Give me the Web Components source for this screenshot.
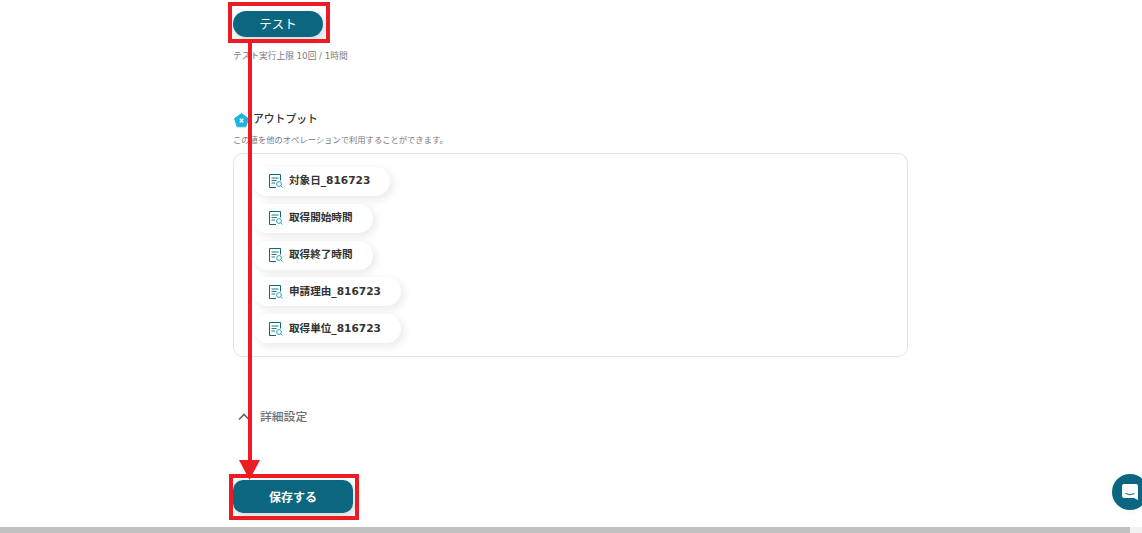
<!DOCTYPE html>
<html lang="ja">
<head>
<meta charset="utf-8">
<title>アウトプット</title>
<style>
html, body { margin: 0; height: 100%; overflow: hidden; background: #fff; }
body { font-family: "DejaVu Sans", "Noto Sans CJK JP", sans-serif; }
</style>
</head>
<body>
<x-page>
	<x-button slot="test" style="--w:90px;--h:26px;--r:13px;--fs:12.5px;--fw:400;--shift:-1px">テスト</x-button>
	<x-output-box slot="output">
		<x-pill>対象日_816723</x-pill>
		<x-pill>取得開始時間</x-pill>
		<x-pill>取得終了時間</x-pill>
		<x-pill>申請理由_816723</x-pill>
		<x-pill>取得単位_816723</x-pill>
	</x-output-box>
	<x-button slot="save" style="--w:120px;--h:33px;--r:10px;--fs:12px;--fw:700;--shift:0px">保存する</x-button>
</x-page>
<x-chat></x-chat>
<x-marks></x-marks>

<script>
class XPage extends HTMLElement {
	constructor() {
		super();
		this.attachShadow({mode:"open"}).innerHTML = `
<style>
:host { display: flex; flex-direction: column; height: 533px; box-sizing: border-box; padding: 11px 0 0 233px; }
.note { margin-top: 13px; font-size: 8.7px; line-height: 13px; color: #7a7a7a; }
h2 { display: flex; align-items: center; gap: 4px; margin: 48px 0 0 1px; font-size: 10.8px; line-height: 18px; font-weight: 500; color: #333; }
h2 svg { flex: none; }
.desc { margin: 5px 0 0; font-size: 8.3px; line-height: 12px; color: #7a7a7a; }
.slot-output { display: block; margin-top: 7px; }
.more { display: flex; align-items: center; gap: 10px; margin: 51px 0 0 5px; font-size: 11.8px; line-height: 18px; font-weight: 500; color: #6f6f6f; }
.save { display: block; margin-top: 54px; }
.bar { position: fixed; left: 0; right: 0; bottom: 0; height: 6px; background: #f1f1f1; }
.bar i { display: block; width: 1130px; height: 100%; background: #c1c1c1; }
</style>
<slot name="test"></slot>
<div class="note">テスト実行上限 10回 / 1時間</div>
<h2>
	<svg width="15" height="15" viewBox="0 0 15 15"><path d="M7.5 .6 14.4 5.6 11.8 13.8H3.2L.6 5.6Z" fill="#1cb4e3" stroke="#1cb4e3" stroke-linejoin="round"/><path d="M5.7 5.7 9.3 9.5M9.3 5.7 5.7 9.5" stroke="#fff" stroke-width="1.2"/></svg>
	<span>アウトプット</span>
</h2>
<p class="desc">この値を他のオペレーションで利用することができます。</p>
<div class="slot-output"><slot name="output"></slot></div>
<div class="more">
	<svg width="12" height="8" viewBox="0 0 12 8"><path d="M1 6.5 6 1.5 11 6.5" fill="none" stroke="#666" stroke-width="1.7"/></svg>
	<span>詳細設定</span>
</div>
<div class="save"><slot name="save"></slot></div>
<div class="bar"><i></i></div>`;
	}
}

class XButton extends HTMLElement {
	constructor() {
		super();
		this.attachShadow({mode:"open"}).innerHTML = `
<style>
:host { display: flex; align-items: center; justify-content: center; box-sizing: border-box; width: var(--w); height: var(--h); border-radius: var(--r); background: #0b6780; color: #fff; font-size: var(--fs); font-weight: var(--fw); box-shadow: 2px 3px 8px rgba(0,0,0,.18); }
span { margin-top: var(--shift); }
</style>
<span><slot></slot></span>`;
	}
}

class XOutputBox extends HTMLElement {
	constructor() {
		super();
		this.attachShadow({mode:"open"}).innerHTML = `
<style>
:host { display: flex; flex-direction: column; align-items: flex-start; gap: 7.8px; box-sizing: border-box; width: 675px; height: 204px; padding: 13px 19px; border: 1px solid #e3e3e3; border-radius: 10px; background: #fff; }
</style>
<slot></slot>`;
	}
}

class XPill extends HTMLElement {
	constructor() {
		super();
		this.attachShadow({mode:"open"}).innerHTML = `
<style>
:host { display: flex; align-items: center; gap: 6px; box-sizing: border-box; height: 29px; padding: 0 20px 0 16px; border-radius: 15px; background: #fff; color: #333; font-size: 10.6px; font-weight: 700; box-shadow: 3px 3px 10px rgba(0,0,0,.09); }
svg { flex: none; }
span { margin-top: -3px; }
</style>
<svg width="14" height="14" viewBox="0 0 14 14" fill="none" stroke="#0b6780">
	<path d="M7 13.5H.5V.5H11.5V6.5"/>
	<path d="M2.5 4H9.5M2.5 6.5H7.5M2.5 9H6" stroke-width=".9"/>
	<circle cx="10" cy="10" r="2.4" stroke="#2aa3c4"/>
	<path d="M11.8 11.8 13.5 13.5" stroke="#2aa3c4"/>
</svg>
<span><slot></slot></span>`;
	}
}

class XChat extends HTMLElement {
	constructor() {
		super();
		this.attachShadow({mode:"open"}).innerHTML = `
<style>
:host { position: fixed; left: 1112px; top: 474px; width: 36px; height: 36px; border-radius: 50%; background: #0b6780; display: flex; align-items: center; justify-content: center; box-shadow: 0 1px 6px rgba(0,0,0,.06); }
</style>
<svg width="18" height="18" viewBox="0 0 18 18"><path d="M3 1H15A2 2 0 0 1 17 3V17L13 15H3A2 2 0 0 1 1 13V3A2 2 0 0 1 3 1Z" fill="#fff"/><path d="M4.5 10.5Q9 13 13.5 10.5" fill="none" stroke="#0b6780" stroke-width="1"/></svg>`;
	}
}

// 赤い注釈は画面全体に重ねる
class XMarks extends HTMLElement {
	constructor() {
		super();
		this.attachShadow({mode:"open"}).innerHTML = `
<style>
:host { position: fixed; inset: 0; pointer-events: none; }
div { position: absolute; box-sizing: border-box; border: 4px solid #ec1c24; }
.line { left: 248px; top: 42px; width: 3.5px; height: 420px; border: 0; background: #ec1c24; }
svg { position: absolute; left: 239px; top: 460px; }
</style>
<div style="left:228px;top:2px;width:102px;height:41px"></div>
<div class="line"></div>
<svg width="21" height="20" viewBox="0 0 21 20"><path d="M0 0H21L10.5 20Z" fill="#ec1c24"/></svg>
<div style="left:229px;top:474px;width:130px;height:46px"></div>`;
	}
}

customElements.define("x-page", XPage);
customElements.define("x-button", XButton);
customElements.define("x-output-box", XOutputBox);
customElements.define("x-pill", XPill);
customElements.define("x-chat", XChat);
customElements.define("x-marks", XMarks);
</script>
</body>
</html>
